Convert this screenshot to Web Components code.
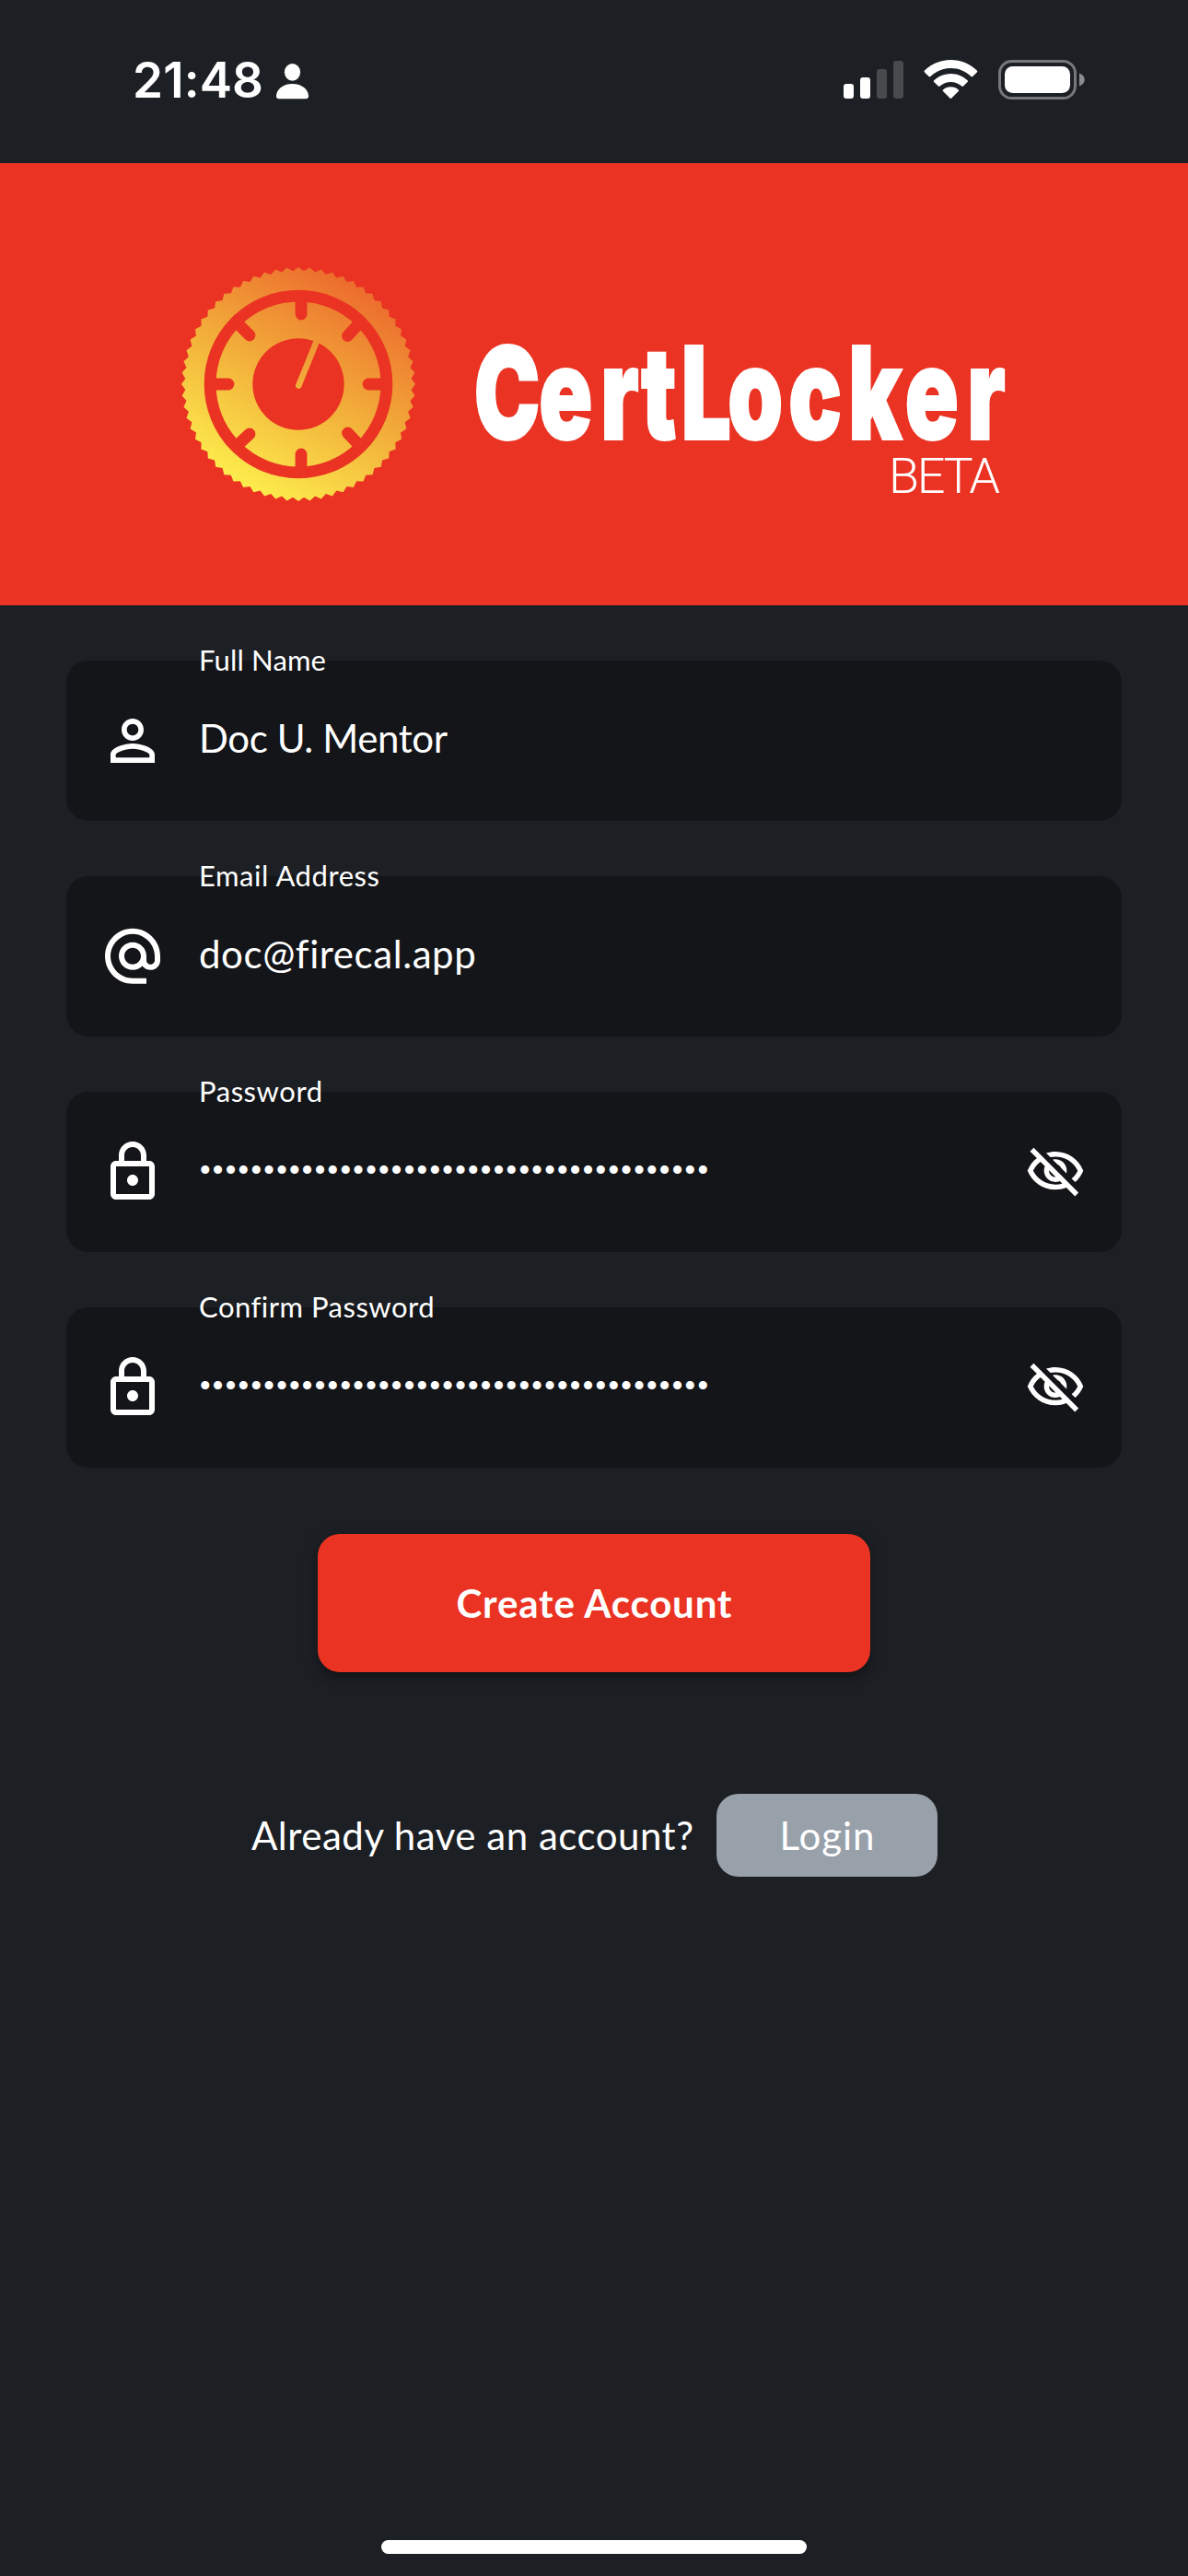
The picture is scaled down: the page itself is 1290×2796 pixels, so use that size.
<!DOCTYPE html>
<html lang="en">
<head>
<meta charset="utf-8">
<title>CertLocker</title>
<style>
  html, body { margin: 0; background: #1c1f24; }
  body { width: 1290px; height: 2796px; overflow: hidden; font-family: Lato, "Open Sans", sans-serif; color: #fff; }
</style>
</head>
<body>
<create-account-page></create-account-page>

<script>
const define = (name, html, setup) => customElements.define(name, class extends HTMLElement {
  connectedCallback() {
    if (this.shadowRoot) return;
    const root = this.attachShadow({ mode: 'open' });
    const tpl = document.createElement('template');
    tpl.innerHTML = html;
    root.append(tpl.content.cloneNode(true));
    if (setup) setup(this, root);
  }
});

/* One line of text whose tracking is adjusted so that it spans a given width. */
define('fit-text', `
  <style>
    :host { display: block; white-space: nowrap; }
    span { display: inline-block; }
  </style><span></span>`, (host, root) => {
  const span = root.querySelector('span');
  const text = host.getAttribute('text');
  const target = parseFloat(host.getAttribute('width'));
  span.textContent = text;
  host.style.width = target + 'px';
  const natural = span.getBoundingClientRect().width;
  span.style.letterSpacing = ((target - natural) / (text.length - 1)) + 'px';
});

const ICONS = {
  person: 'M12 5.9c1.16 0 2.1.94 2.1 2.1s-.94 2.1-2.1 2.1S9.9 9.16 9.9 8s.94-2.1 2.1-2.1m0 9c2.97 0 6.1 1.46 6.1 2.1v1.1H5.9V17c0-.64 3.13-2.1 6.1-2.1M12 4C9.79 4 8 5.79 8 8s1.79 4 4 4 4-1.79 4-4-1.79-4-4-4zm0 9c-2.67 0-8 1.34-8 4v3h16v-3c0-2.66-5.33-4-8-4z',
  email: 'M12 1.95c-5.52 0-10 4.48-10 10s4.48 10 10 10h5v-2h-5c-4.34 0-8-3.66-8-8s3.66-8 8-8 8 3.66 8 8v1.43c0 .79-.71 1.57-1.5 1.57s-1.5-.78-1.5-1.57v-1.43c0-2.76-2.24-5-5-5s-5 2.24-5 5 2.24 5 5 5c1.38 0 2.64-.56 3.54-1.47.65.89 1.77 1.47 2.96 1.47 1.97 0 3.5-1.6 3.5-3.57v-1.43c0-5.52-4.48-10-10-10zm0 13c-1.66 0-3-1.34-3-3s1.34-3 3-3 3 1.34 3 3-1.34 3-3 3z',
  lock: 'M18 8h-1V6c0-2.76-2.24-5-5-5S7 3.24 7 6v2H6c-1.1 0-2 .9-2 2v10c0 1.1.9 2 2 2h12c1.1 0 2-.9 2-2V10c0-1.1-.9-2-2-2zM9 6c0-1.66 1.34-3 3-3s3 1.34 3 3v2H9V6zm9 14H6V10h12v10zm-6-3c1.1 0 2-.9 2-2s-.9-2-2-2-2 .9-2 2 .9 2 2 2z',
  hidden: 'M12 6c3.79 0 7.17 2.13 8.82 5.5-.59 1.22-1.42 2.27-2.41 3.12l1.41 1.41c1.39-1.23 2.49-2.77 3.18-4.53C21.27 7.11 17 4 12 4c-1.27 0-2.49.2-3.64.57l1.65 1.65C10.66 6.09 11.32 6 12 6zm-1.07 1.14L13 9.21c.57.25 1.03.71 1.28 1.28l2.07 2.07c.08-.34.14-.7.14-1.07C16.5 9.01 14.48 7 12 7c-.37 0-.72.05-1.07.14zM2.01 3.87l2.68 2.68C3.06 7.83 1.77 9.53 1 11.5 2.73 15.89 7 19 12 19c1.52 0 2.98-.29 4.32-.82l3.42 3.42 1.41-1.41L3.42 2.45 2.01 3.87zm7.5 7.5l2.61 2.61c-.04.01-.08.02-.12.02-1.38 0-2.5-1.12-2.5-2.5 0-.05.01-.08.01-.13zm-3.4-3.4l1.75 1.75c-.23.55-.36 1.15-.36 1.78 0 2.48 2.02 4.5 4.5 4.5.63 0 1.23-.13 1.77-.36l.98.98c-.88.24-1.8.38-2.75.38-3.79 0-7.17-2.13-8.82-5.5.7-1.43 1.72-2.61 2.93-3.53z'
};

define('app-icon', `
  <style>
    :host { display: block; flex: none; width: 72px; height: 72px; }
    svg { display: block; width: 100%; height: 100%; fill: #fff; }
  </style><svg viewBox="0 0 24 24"><path/></svg>`, (host, root) => {
  root.querySelector('path').setAttribute('d', ICONS[host.getAttribute('name')]);
});

define('status-bar', `
  <style>
    :host { display: flex; height: 177px; box-sizing: border-box; padding: 57px 112px 60px 144px; justify-content: space-between; align-items: center; }
    .left, .right { display: flex; align-items: center; height: 60px; }
    fit-text { font: 600 53px/60px Inter, sans-serif; }
    svg { display: block; }
  </style>
  <div class="left">
    <fit-text text="21:48" width="142"></fit-text>
    <svg width="50" height="60" viewBox="286 57 50 60" fill="#fff">
      <ellipse cx="317.5" cy="78.3" rx="8.6" ry="9.4"/>
      <path d="M303 107.2q-3 0-3-3c0-6.800 7-13.300 17.500-13.300S335 97.400 335 104.200q0 3-3 3z"/>
    </svg>
  </div>
  <div class="right">
    <svg width="270" height="60" viewBox="908 57 270 60" fill="#fff">
      <rect x="916" y="91" width="11" height="16" rx="3"/>
      <rect x="934" y="84" width="11" height="23" rx="3"/>
      <rect x="952" y="75" width="11" height="32" rx="3" fill="#484b4e"/>
      <rect x="970" y="66" width="11" height="41" rx="3" fill="#484b4e"/>
      <path d="M1032.400 65c11.100 0 21.100 4.400 28.400 11.600q.9.900 0 1.800l-4.600 4.600q-.8.800-1.700 0c-5.800-5.600-13.500-9-22.100-9s-16.300 3.400-22.100 9q-.9.800-1.700 0l-4.600-4.600q-.9-.9 0-1.800C1011.300 69.400 1021.300 65 1032.400 65z"/>
      <path d="M1032.400 80c7 0 13.400 2.800 18.200 7.200q.9.900 0 1.800l-4.600 4.500q-.8.800-1.700 0c-3.200-2.900-7.400-4.600-11.900-4.600s-8.700 1.700-11.900 4.600q-.9.800-1.700 0l-4.600-4.500q-.9-.9 0-1.800C1019 82.800 1025.400 80 1032.400 80z"/>
      <path d="M1032.400 94.200c3.200 0 6.100 1.200 8.400 3.200q.9.900 0 1.700l-7.500 7.500q-.9.900-1.800 0l-7.500-7.500q-.9-.800 0-1.700C1026.300 95.400 1029.200 94.200 1032.400 94.200z"/>
      <rect x="1085.500" y="66.500" width="82" height="40" rx="13" fill="none" stroke="#76787b" stroke-width="3"/>
      <rect x="1091" y="72" width="71" height="29" rx="8.500"/>
      <path d="M1172 79.500c3.500 1.400 5.700 3.800 5.700 7s-2.200 5.600-5.700 7z" fill="#8b8c8e"/>
    </svg>
  </div>`);

define('dial-logo', `
  <style>:host { display: block; width: 256px; height: 256px; flex: none; } svg { display: block; }</style>
  <svg width="256" height="256" viewBox="-128 -128 256 256">
    <defs>
      <linearGradient id="g" gradientUnits="userSpaceOnUse" x1="-62" y1="113" x2="62" y2="-113">
        <stop offset="0" stop-color="#fdee4d"/><stop offset=".5" stop-color="#f2ae3a"/><stop offset="1" stop-color="#ec6a2d"/>
      </linearGradient>
    </defs>
    <polygon fill="url(#g)"/>
    <g fill="none" stroke="#ea3323" stroke-width="12.800">
      <circle r="95.900"/>
      <g stroke-linecap="round">
        <path d="M3-93V-76M3 93V76M-93 0H-76M93 0H76M-66-66L-53-53M66-66L53.500-52.500M-66 66L-53 54M66 66L53.500 53"/>
      </g>
    </g>
    <circle r="49.700" fill="#ea3323"/>
    <path d="M.3 1.500L20-47" fill="none" stroke="url(#g)" stroke-width="6.600" stroke-linecap="round"/>
  </svg>`, (host, root) => {
  const pts = [];
  for (let i = 0; i < 128; i++) {
    const a = i * Math.PI / 64, r = i % 2 ? 122.8 : 127;
    pts.push((r * Math.sin(a)).toFixed(2) + ',' + (-r * Math.cos(a)).toFixed(2));
  }
  root.querySelector('polygon').setAttribute('points', pts.join(' '));
});

define('brand-header', `
  <style>
    :host { display: flex; height: 480px; box-sizing: border-box; background: #ea3323; padding: 112px 0 0 196px; gap: 60px; }
    svg { display: block; flex: none; }
  </style>
  <dial-logo></dial-logo>
  <svg width="600" height="280" viewBox="512 289 600 280" fill="#fff">
    <text id="name" transform="translate(0 476.500) scale(.69 1)" font-family="Inter" font-weight="900" font-size="140" stroke="#fff" stroke-width="2">CertLocker</text>
    <text x="965" y="535.300" font-family="Roboto" font-weight="300" font-size="54" textLength="121" lengthAdjust="spacing">BETA</text>
  </svg>`, (host, root) => {
  const left = [517.5, 588, 656, 700, 742.5, 793, 859, 924, 985.5, 1054];
  root.querySelector('#name').setAttribute('x', left.map((v, i) => ((v - ('CeocLk'.includes('CertLocker'[i]) ? 3 : 4)) / .69).toFixed(1)).join(' '));
});

define('text-field', `
  <style>
    :host { display: flex; position: relative; align-items: center; height: 174px; box-sizing: border-box; padding: 0 39px 0 36px; border-radius: 24px; background: #141519; }
    .label { position: absolute; left: 144px; top: -19px; font-size: 31px; line-height: 36px; }
    .value { flex: 1; margin-left: 36px; font-size: 42px; line-height: 60px; padding-bottom: 6px; }
    .value.secret { margin-left: 37px; font: 33px/60px "Liberation Sans", sans-serif; padding-bottom: 5px; }
    .toggle { width: 66px; height: 66px; }
  </style>
  <slot></slot>
  <div class="value"></div>`, (host, root) => {
  const label = document.createElement('fit-text');
  label.className = 'label';
  label.setAttribute('text', host.getAttribute('label'));
  label.setAttribute('width', host.getAttribute('label-width'));
  root.append(label);
  const box = root.querySelector('.value');
  const value = document.createElement('fit-text');
  const secret = host.hasAttribute('secret');
  value.setAttribute('text', secret ? '•'.repeat(40) : host.getAttribute('value'));
  value.setAttribute('width', host.getAttribute('value-width'));
  if (secret) {
    box.classList.add('secret');
    const eye = document.createElement('app-icon');
    eye.className = 'toggle';
    eye.setAttribute('name', 'hidden');
    box.after(eye);
  }
  box.append(value);
});

define('primary-button', `
  <style>
    :host { display: flex; align-items: center; justify-content: center; width: 600px; height: 150px; border-radius: 24px; background: #ea3323; font-size: 42px; font-weight: 700; line-height: 60px; box-shadow: 0 9px 12px -4px rgba(0,0,0,.3), 0 3px 18px rgba(0,0,0,.2); }
  </style><slot></slot>`);

define('login-chip', `
  <style>
    :host { display: flex; align-items: center; justify-content: center; width: 240px; height: 90px; border-radius: 24px; background: #98a0aa; }
  </style><slot></slot>`);

define('create-account-page', `
  <style>
    :host { display: flex; flex-direction: column; height: 2796px; background: #1c1f24; }
    form { display: flex; flex-direction: column; gap: 60px; padding: 60px 72px 0; margin: 0; }
    .action { display: flex; justify-content: center; padding-top: 72px; }
    .login { display: flex; justify-content: center; align-items: center; gap: 25px; padding: 132px 0 0 1px; font-size: 42px; line-height: 60px; }
    .home { margin: auto auto 24px; width: 462px; height: 15px; border-radius: 8px; background: #fff; }
  </style>
  <status-bar></status-bar>
  <brand-header></brand-header>
  <form>
    <text-field label="Full Name" label-width="138" value="Doc U. Mentor" value-width="270"><app-icon name="person"></app-icon></text-field>
    <text-field label="Email Address" label-width="196" value="doc@firecal.app" value-width="300"><app-icon name="email"></app-icon></text-field>
    <text-field label="Password" label-width="134" secret value-width="552"><app-icon name="lock"></app-icon></text-field>
    <text-field label="Confirm Password" label-width="255" secret value-width="552"><app-icon name="lock"></app-icon></text-field>
  </form>
  <div class="action"><primary-button><fit-text text="Create Account" width="299"></fit-text></primary-button></div>
  <div class="login">
    <fit-text text="Already have an account?" width="480"></fit-text>
    <login-chip><fit-text text="Login" width="103"></fit-text></login-chip>
  </div>
  <div class="home"></div>`);
</script>
</body>
</html>
